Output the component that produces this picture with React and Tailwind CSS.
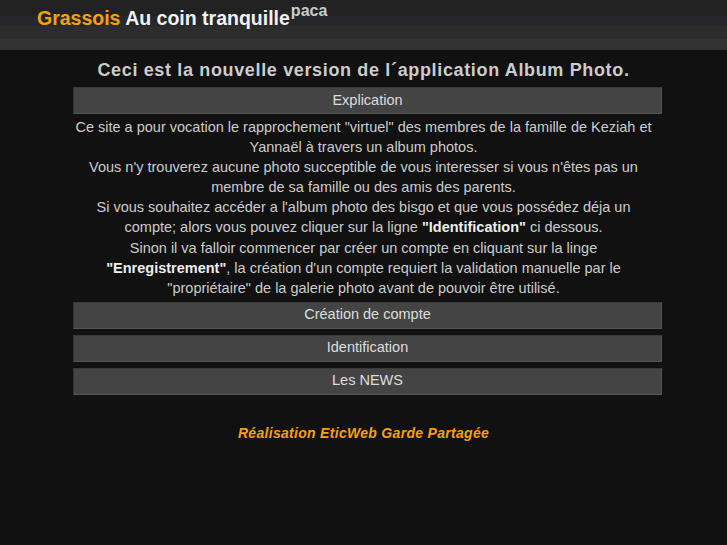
export default function App() {
  const bar =
    "h-[27px] flex items-center justify-center bg-[#444444] border border-t-[#3a3a3a] border-l-[#333333] border-r-[#555555] border-b-[#555555] text-[#dddddd] text-[14.5px]";
  return (
    <div className="min-h-[545px] bg-[#111111] font-['Liberation_Sans',sans-serif]">
      <header className="h-[50px] flex flex-col relative">
        <div className="h-[16px] bg-[#222222]" />
        <div className="h-[10px] bg-[#25272a]" />
        <div className="h-[13px] bg-[#2c2c2c]" />
        <div className="h-[11px] bg-[#333333]" />
        <div className="absolute left-[37px] top-[5px] font-bold text-[19.5px] leading-[26px] whitespace-nowrap">
          <span className="text-[#f7a010]">Grassois</span>{" "}
          <span className="text-[#f2f2f2]">Au coin tranquille</span>
          <span className="text-[#cccccc] text-[16px] relative top-[-9px] ml-[1px]">paca</span>
        </div>
      </header>
      <main className="flex flex-col">
        <h1 className="mt-[9px] text-center font-bold text-[18px] tracking-[0.65px] leading-[22px] text-[#cccccc] whitespace-nowrap">
          Ceci est la nouvelle version de l´application Album Photo.
        </h1>
        <div className={bar + " mt-[6px] ml-[73px] w-[589px]"}>Explication</div>
        <p className="mx-auto w-[589px] text-center text-[14.5px] leading-[20.1px] text-[#cccccc] mt-[3px]">
          Ce site a pour vocation le rapprochement "virtuel" des membres de la famille de Keziah et Yannaël à travers un album photos.
          <br />
          Vous n'y trouverez aucune photo succeptible de vous interesser si vous n'êtes pas un membre de sa famille ou des amis des parents.
          <br />
          Si vous souhaitez accéder a l'album photo des bisgo et que vous possédez déja un compte; alors vous pouvez cliquer sur la ligne{" "}
          <b className="text-[#eeeeee]">"Identification"</b> ci dessous.
          <br />
          Sinon il va falloir commencer par créer un compte en cliquant sur la linge{" "}
          <b className="text-[#eeeeee]">"Enregistrement"</b>, la création d'un compte requiert la validation manuelle par le "propriétaire" de la galerie photo avant de pouvoir être utilisé.
        </p>
        <div className="flex flex-col gap-[6px] mt-[4px] ml-[73px] w-[589px]">
          <div className={bar}>Création de compte</div>
          <div className={bar}>Identification</div>
          <div className={bar}>Les NEWS</div>
        </div>
        <p className="mt-[28px] text-center font-bold italic text-[14px] leading-[20px] tracking-[0.3px] text-[#f7a010]">
          Réalisation EticWeb Garde Partagée
        </p>
      </main>
    </div>
  );
}
